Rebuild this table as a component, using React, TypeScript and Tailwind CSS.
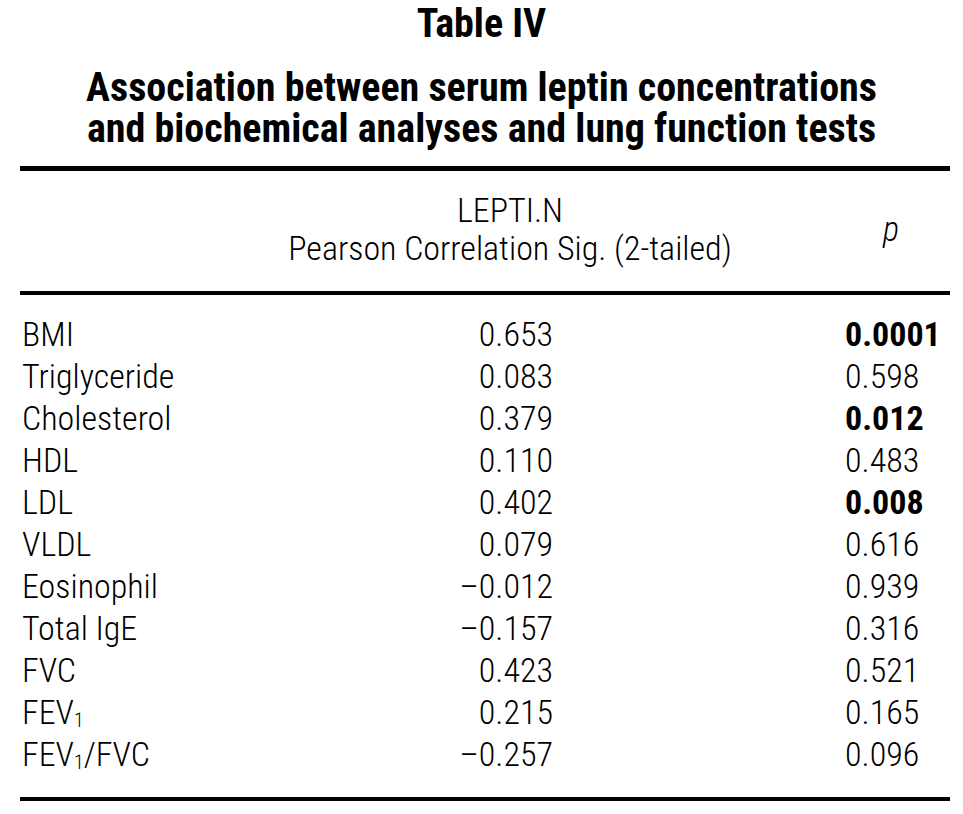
const rows = [
  { label: "BMI", r: "0.653", p: "0.0001", sig: true },
  { label: "Triglyceride", r: "0.083", p: "0.598" },
  { label: "Cholesterol", r: "0.379", p: "0.012", sig: true },
  { label: "HDL", r: "0.110", p: "0.483" },
  { label: "LDL", r: "0.402", p: "0.008", sig: true },
  { label: "VLDL", r: "0.079", p: "0.616" },
  { label: "Eosinophil", r: "–0.012", p: "0.939" },
  { label: "Total IgE", r: "–0.157", p: "0.316" },
  { label: "FVC", r: "0.423", p: "0.521" },
  { label: "FEV1", r: "0.215", p: "0.165" },
  { label: "FEV1/FVC", r: "–0.257", p: "0.096" },
];

function Label({ text }: { text: string }) {
  // FEV1 -> FEV with subscript 1
  const parts = text.split("FEV1");
  if (parts.length === 1) return <>{text}</>;
  return (
    <>
      {parts.map((part, i) => (
        <span key={i}>
          {i > 0 && (
            <>
              FEV<sub className="text-[20px] -bottom-[0.15em]">1</sub>
            </>
          )}
          {part}
        </span>
      ))}
    </>
  );
}

export default function App() {
  return (
    <div className="w-[963px] h-[814px] bg-white text-black font-['Roboto','Liberation_Sans',Arial,sans-serif] font-stretch-condensed">
      <h1 className="text-center text-[40px] leading-[47px] font-bold">Table IV</h1>
      <h2 className="mt-[20px] text-center text-[40px] font-bold">
        <div className="h-[41px] leading-[41px]">Association between serum leptin concentrations</div>
        <div className="h-[41px] leading-[41px]">and biochemical analyses and lung function tests</div>
      </h2>

      <div className="mt-[17px] ml-[20px] w-[930px] h-[5px] bg-black" />

      <div className="mt-[20px] flex items-start h-[76px] text-[34px] leading-[38px] font-light">
        <div className="ml-[280px] w-[460px] text-center whitespace-nowrap">
          <div>LEPTI.N</div>
          <div>Pearson Correlation Sig. (2-tailed)</div>
        </div>
        <div className="ml-[143px] mt-[19px] italic">p</div>
      </div>

      <div className="mt-[24px] ml-[20px] w-[930px] h-[4px] bg-black" />

      <div className="mt-[18px] text-[34px] leading-[42px] font-light">
        {rows.map((row) => (
          <div key={row.label} className="flex h-[42px]">
            <div className="ml-[22px] w-[300px]">
              <Label text={row.label} />
            </div>
            <div className="w-[231px] text-right">{row.r}</div>
            <div className={`ml-[292px] ${row.sig ? "font-bold" : ""}`}>{row.p}</div>
          </div>
        ))}
      </div>

      <div className="mt-[22px] ml-[20px] w-[930px] h-[4px] bg-black" />
    </div>
  );
}
